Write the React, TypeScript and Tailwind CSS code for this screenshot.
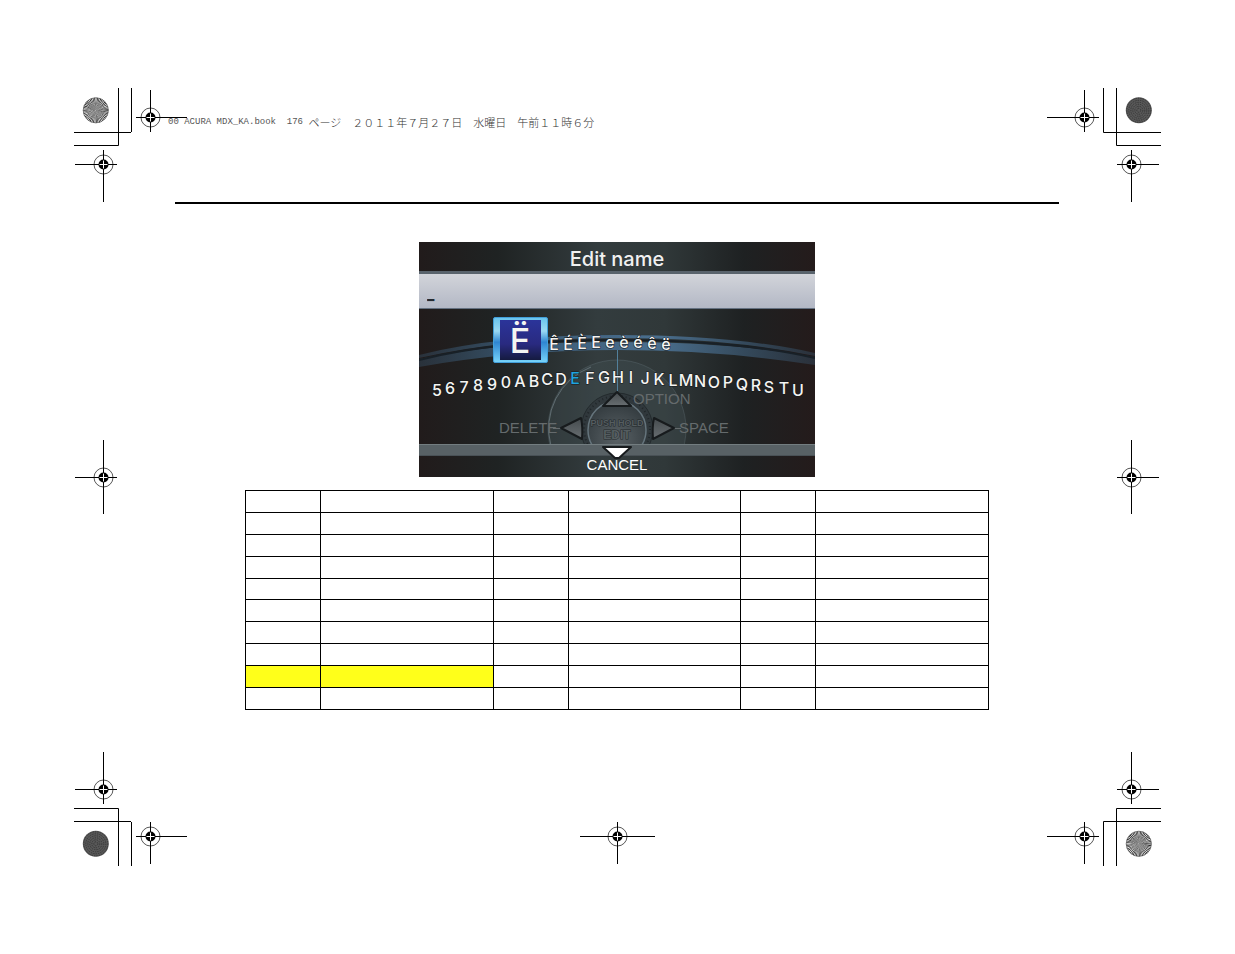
import { useState } from "react";

type Point = [number, number];

// [character, centre x, baseline y] on the screen canvas
const WHEEL: [string, number, number][] = [
  ["5", 18, 154], ["6", 31, 152], ["7", 45, 151], ["8", 59, 149], ["9", 73, 148],
  ["0", 87, 146], ["A", 101, 145], ["B", 115, 145], ["C", 128, 143], ["D", 142, 143],
  ["E", 156, 142], ["F", 171, 142], ["G", 185, 141], ["H", 199, 141], ["I", 212, 141],
  ["J", 226, 142], ["K", 240, 143], ["L", 254, 144], ["M", 267, 144], ["N", 281, 145],
  ["O", 295, 146], ["P", 309, 146], ["Q", 323, 148], ["R", 337, 149], ["S", 350, 151],
  ["T", 365, 152], ["U", 379, 154],
];

const ACCENTS: [string, number, number][] = [
  ["Ê", 135, 108], ["É", 149, 108], ["È", 163, 107], ["E", 177, 106], ["e", 191, 106],
  ["è", 205, 106], ["é", 219, 106], ["ê", 233, 107], ["ë", 247, 108],
];

const ROWS = Array.from({ length: 10 }, (_, i) => i);
const COLUMNS = Array.from({ length: 6 }, (_, i) => i);

function Register({ at, h, v }: { at: Point; h: Point; v: Point }) {
  const x = at[0] + 0.5;
  const y = at[1] + 0.5;
  return (
    <g stroke="#000" fill="none">
      <circle cx={x} cy={y} r="9.5" stroke="#444" strokeWidth="0.9" />
      <path d={`M${h[0]} ${y}H${h[1]}M${x} ${v[0]}V${v[1]}`} />
      <circle cx={x} cy={y} r="5" fill="#000" stroke="none" />
      <path d={`M${x - 4} ${y}h8M${x} ${y - 4}v8`} stroke="#fff" />
    </g>
  );
}

function Rosette({ at }: { at: Point }) {
  return (
    <g fill="none">
      <circle cx={at[0]} cy={at[1]} r="6.3" stroke="#111" strokeWidth="12.6" strokeDasharray="0.4123 0.4123" />
      <circle cx={at[0]} cy={at[1]} r="12.6" stroke="#555" strokeWidth="0.7" />
    </g>
  );
}

function Tint({ at }: { at: Point }) {
  return (
    <g fill="none">
      <circle cx={at[0]} cy={at[1]} r="13" fill="#585858" />
      {[2, 4, 6, 8, 10, 12].map((r) => (
        <circle key={r} cx={at[0]} cy={at[1]} r={r} stroke="#333" strokeWidth="0.9" strokeDasharray="1.4 1" />
      ))}
    </g>
  );
}

function LeftMarks() {
  return (
    <div className="flex flex-col justify-between" aria-hidden="true">
      <svg width="113" height="115" className="max-w-none shrink-0">
        <path d="M44.5 0V57.5H0M57.5 0V44M57 44.5H0" fill="none" stroke="#000" />
        <Rosette at={[21.8, 22.3]} />
        <Register at={[76, 29]} h={[62, 113]} v={[2, 44]} />
        <Register at={[29, 76]} h={[1, 43]} v={[62, 114]} />
      </svg>
      <svg width="113" height="75" className="max-w-none shrink-0">
        <Register at={[29, 37]} h={[1, 43]} v={[0, 74]} />
      </svg>
      <svg width="113" height="114" className="max-w-none shrink-0">
        <path d="M0 56.5H44.5V114M0 69.5H57M57.5 70V114" fill="none" stroke="#000" />
        <Tint at={[21.8, 91.8]} />
        <Register at={[29, 37]} h={[1, 43]} v={[0, 52]} />
        <Register at={[76, 84]} h={[62, 113]} v={[70, 112]} />
      </svg>
    </div>
  );
}

function RightMarks() {
  return (
    <div className="flex flex-col items-end justify-between" aria-hidden="true">
      <svg width="114" height="115" className="max-w-none shrink-0">
        <path d="M56.5 0V44.5H114M69.5 0V57.5H114" fill="none" stroke="#000" />
        <Tint at={[91.8, 22.3]} />
        <Register at={[37, 29]} h={[0, 52]} v={[2, 44]} />
        <Register at={[84, 76]} h={[70, 112]} v={[62, 114]} />
      </svg>
      <svg width="114" height="75" className="max-w-none shrink-0">
        <Register at={[84, 37]} h={[70, 112]} v={[0, 74]} />
      </svg>
      <svg width="114" height="114" className="max-w-none shrink-0">
        <path d="M114 56.5H69.5V114M114 69.5H56.5V114" fill="none" stroke="#000" />
        <Rosette at={[91.8, 91.8]} />
        <Register at={[84, 37]} h={[70, 112]} v={[0, 52]} />
        <Register at={[37, 84]} h={[0, 52]} v={[70, 112]} />
      </svg>
    </div>
  );
}

function Artwork() {
  return (
    <svg viewBox="0 0 396 235" className="absolute inset-0 h-full w-full" aria-hidden="true">
      <defs>
        <linearGradient id="back" x1="0" x2="1" y1="0" y2="0">
          <stop offset="0" stopColor="#211b1b" />
          <stop offset="0.2" stopColor="#1f2323" />
          <stop offset="0.45" stopColor="#333c3e" />
          <stop offset="0.62" stopColor="#303839" />
          <stop offset="0.82" stopColor="#1e2122" />
          <stop offset="1" stopColor="#241b1b" />
        </linearGradient>
        <linearGradient id="arc" x1="0" x2="1" y1="0" y2="0">
          <stop offset="0" stopColor="#32475a" stopOpacity="0.5" />
          <stop offset="0.3" stopColor="#3c5b76" />
          <stop offset="0.6" stopColor="#4a6f8f" />
          <stop offset="1" stopColor="#32475a" stopOpacity="0.5" />
        </linearGradient>
        <radialGradient id="hub" cx="0.5" cy="0.65" r="0.6">
          <stop offset="0" stopColor="#596165" />
          <stop offset="1" stopColor="#353d41" />
        </radialGradient>
        <linearGradient id="frame" x1="0" x2="0" y1="0" y2="1">
          <stop offset="0" stopColor="#67c4ee" />
          <stop offset="0.3" stopColor="#9ad9f3" />
          <stop offset="0.55" stopColor="#2f86d2" />
          <stop offset="1" stopColor="#79d5fa" />
        </linearGradient>
        <linearGradient id="tile" x1="0" x2="0" y1="0" y2="1">
          <stop offset="0" stopColor="#2b349a" />
          <stop offset="0.6" stopColor="#292a80" />
          <stop offset="1" stopColor="#151b40" />
        </linearGradient>
        <linearGradient id="key" x1="0" x2="0" y1="0" y2="1">
          <stop offset="0" stopColor="#454b4e" />
          <stop offset="1" stopColor="#686e71" />
        </linearGradient>
        <clipPath id="aboveBar">
          <path d="M0 67H396V202H0z" />
        </clipPath>
      </defs>
      <path d="M0 0H396V235H0z" fill="url(#back)" />
      <g clipPath="url(#aboveBar)">
        <circle cx="198" cy="187" r="69" fill="#4c5b60" fillOpacity="0.25" stroke="#6c7d83" strokeOpacity="0.3" />
        <path d="M132 204a66 66 0 0 1 40-79" fill="none" stroke="#7c8b91" strokeOpacity="0.6" />
        <path d="M0 113Q80 93 198 93T396 111V114Q310 96 198 96T0 116z" fill="url(#arc)" />
        <path d="M0 117Q80 100 198 100T396 115V123Q300 108 198 108T0 125z" fill="url(#arc)" />
        <path d="M0 118Q80 98 198 98T396 116" fill="none" stroke="#182027" strokeWidth="2" />
        <path d="M198.5 108V149" stroke="#52809b" />
        <circle cx="198" cy="187" r="36" fill="#30383c" stroke="#232a2d" />
        <circle cx="198" cy="187" r="33" fill="none" stroke="#202629" strokeWidth="2" strokeDasharray="1 3" />
        <circle cx="198" cy="188" r="29" fill="url(#hub)" stroke="#65747c" strokeWidth="1.5" />
      </g>
      <path d="M0 202H396V214H0z" fill="#586165" />
      <path d="M0 202.5H396" stroke="#737d80" />
      <path d="M0 213.5H396" stroke="#495156" />
      <path d="M134 186.5H143M254 186.5H262" stroke="#656b6d" />
      <g stroke="#171b1d" strokeWidth="2" strokeLinejoin="round">
        <path d="M142 186 162 176Q164 185 163 197z" fill="url(#key)" />
        <path d="M255 186 235 176Q233 185 234 197z" fill="url(#key)" />
        <path d="M198 150 212 164H184z" fill="url(#key)" />
        <path d="M184 205H212L200 216H196z" fill="#fff" />
      </g>
      <rect x="74.5" y="75.5" width="54" height="45" rx="1.5" fill="url(#frame)" stroke="#429fda" />
      <path d="M81 78H122V118H81z" fill="url(#tile)" />
    </svg>
  );
}

function EditNameScreen() {
  const [name, setName] = useState("_");

  return (
    <section className="relative mt-[38px] flex w-[396px] flex-col self-center overflow-hidden font-['Liberation_Sans',sans-serif] text-[15px]">
      <Artwork />
      <h1 className="relative flex h-[29px] items-center justify-center pt-1 font-['Inter',sans-serif] text-[20px] font-medium text-[#f1f1f1]">
        Edit name
      </h1>
      <input
        aria-label="Name"
        value={name}
        onChange={(e) => setName(e.target.value)}
        className="relative h-[38px] w-full border-t-[3px] border-b border-t-[#59636c] border-b-[#647181] bg-linear-to-b from-[#d2d4da] to-[#b3b8c5] px-2 pt-1 font-['Inter',sans-serif] font-black text-[#252a30] outline-none"
      />
      <div className="relative h-[168px]">
        <svg viewBox="0 67 396 168" className="h-full w-full">
          <g textAnchor="middle" fill="#f4f4f2" fontFamily="Inter, sans-serif">
            <text x="101" y="111" fontSize="34" fontWeight="500">Ë</text>
            <g fontSize="16" fontWeight="500" stroke="#15191b" strokeWidth="1" paintOrder="stroke">
              {ACCENTS.map(([char, x, y]) => (
                <text key={char} x={x} y={y}>{char}</text>
              ))}
              {WHEEL.map(([char, x, y]) => (
                <text key={char} x={x} y={y} fill={char === "E" ? "#20a4df" : undefined}>{char}</text>
              ))}
            </g>
          </g>
          <g
            textAnchor="middle"
            fill="#555d60"
            stroke="#23292c"
            strokeWidth="1"
            paintOrder="stroke"
            fontFamily="'Liberation Sans', sans-serif"
            fontWeight="700"
          >
            <text x="198" y="184" fontSize="9">PUSH HOLD</text>
            <text x="198" y="197" fontSize="12">EDIT</text>
          </g>
        </svg>
        <button type="button" className="absolute top-[111px] left-[80px] leading-4 text-[#656b6d]">DELETE</button>
        <button type="button" className="absolute top-[82px] left-[214px] leading-4 text-[#656b6d]">OPTION</button>
        <button type="button" className="absolute top-[111px] left-[260px] leading-4 text-[#656b6d]">SPACE</button>
        <button type="button" className="absolute bottom-1 left-1/2 -translate-x-1/2 leading-4 text-white">CANCEL</button>
      </div>
    </section>
  );
}

function CharacterTable() {
  return (
    <table className="mt-[13px] h-[220px] w-[84.1%] table-fixed border-collapse self-center border border-black">
      <colgroup>
        {COLUMNS.map((col) => (
          <col key={col} className={col % 2 ? "w-[23.2%]" : "w-[10.1%]"} />
        ))}
      </colgroup>
      <tbody>
        {ROWS.map((row) => (
          <tr key={row}>
            {COLUMNS.map((col) => (
              <td
                key={col}
                className={`border border-black p-0 ${row === 8 && col < 2 ? "bg-[#ffff1a]" : ""}`}
              />
            ))}
          </tr>
        ))}
      </tbody>
    </table>
  );
}

export default function App() {
  return (
    <div className="grid min-h-screen grid-cols-[94px_minmax(0,1fr)_102px] bg-white px-[74px] py-[88px]">
      <LeftMarks />
      <main className="relative flex flex-col pl-[7px]">
        <p
          lang="ja"
          className="mt-[26px] -ml-[7px] flex items-center font-['Noto_Sans_CJK_JP',sans-serif] text-[11px] leading-4 font-light whitespace-pre text-[#333]"
        >
          <span className="font-['Liberation_Mono',monospace] text-[9px] text-[#555]">{"00 ACURA MDX_KA.book  176 "}</span>
          <span>ページ　２０１１年７月２７日　水曜日　午前１１時６分</span>
        </p>
        <hr className="mt-[72px] border-t-2 border-black" />
        <EditNameScreen />
        <CharacterTable />
        <svg width="75" height="44" className="mt-auto self-center" aria-hidden="true">
          <Register at={[37, 14]} h={[0, 75]} v={[0, 42]} />
        </svg>
      </main>
      <RightMarks />
    </div>
  );
}
